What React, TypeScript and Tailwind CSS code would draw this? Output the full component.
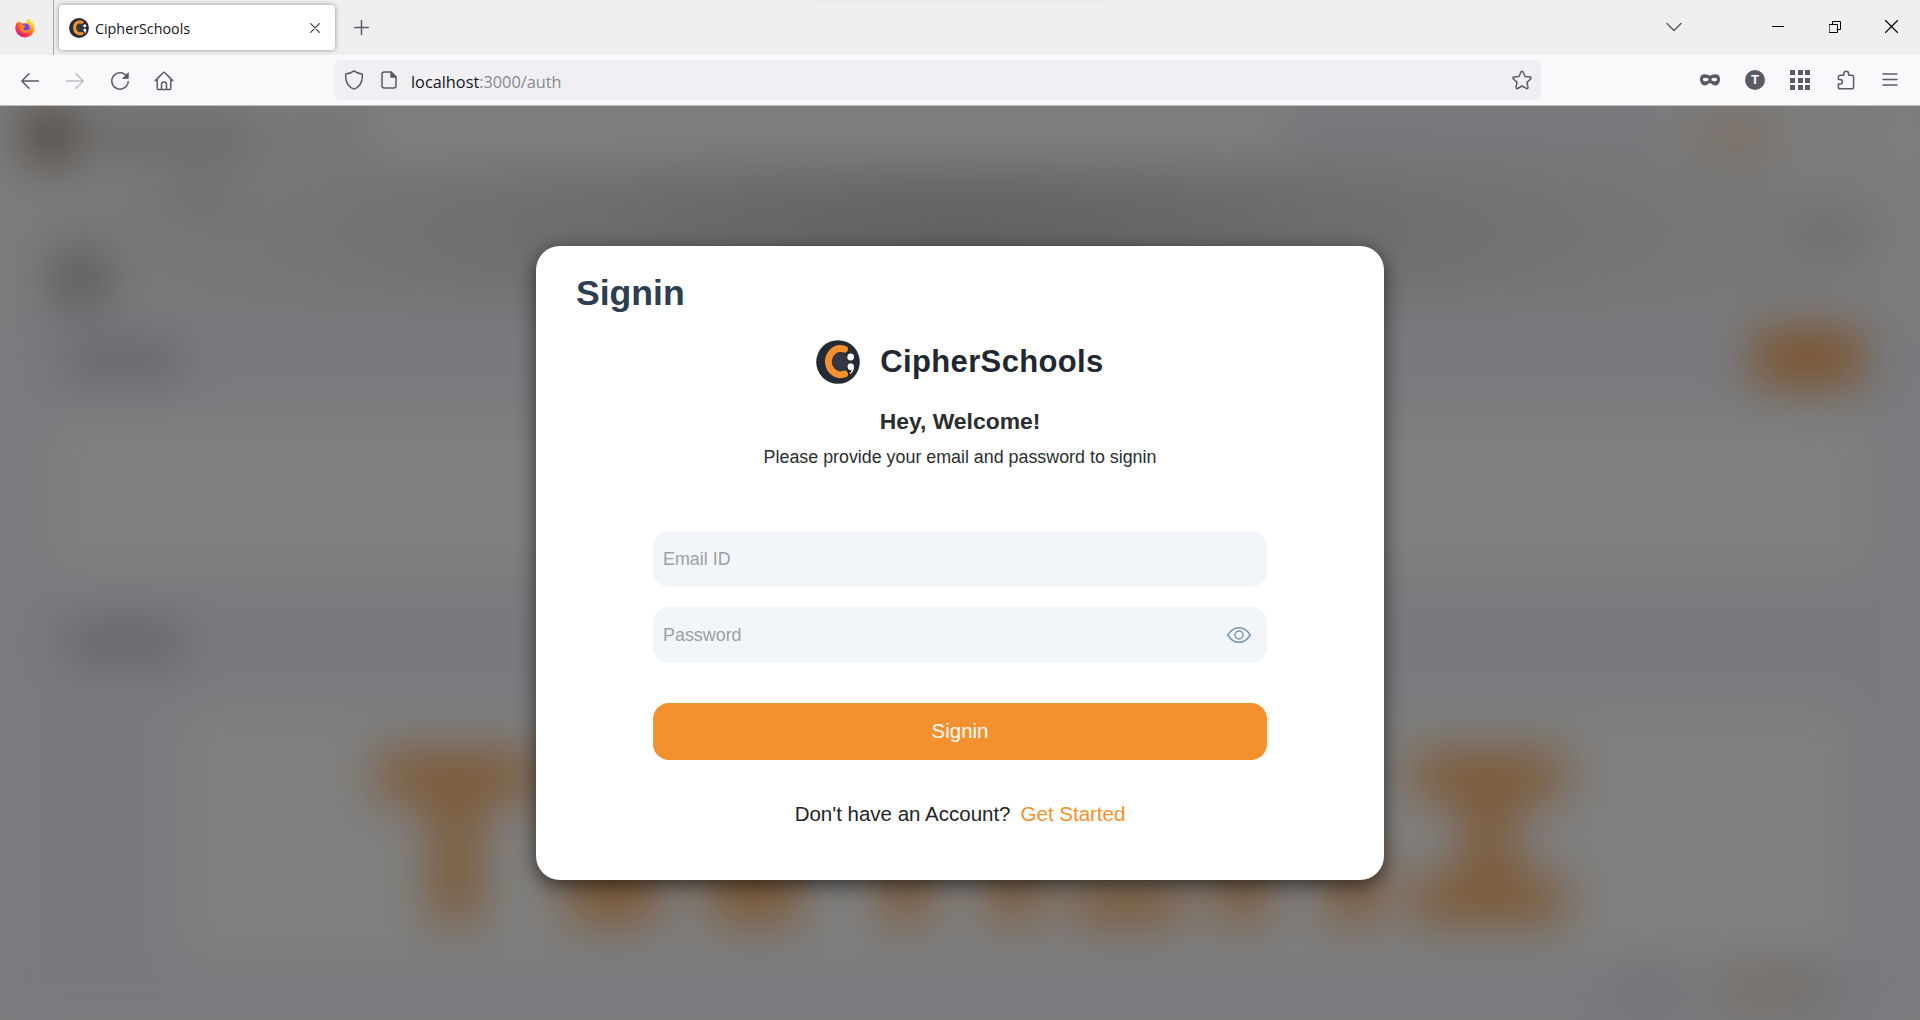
import type { ReactNode } from "react";

function Logo({ className }: { className: string }) {
  return (
    <svg viewBox="0 0 44 44" className={className} aria-hidden="true">
      <circle cx="22" cy="22" r="21.8" fill="#252b35" />
      <circle cx="23" cy="22" r="10" fill="#333843" />
      <path d="M28.600 9.200C26.800 8.600 24.800 8.400 23 8.400A13.500 13.500 0 0 0 23 34.800C24.800 34.800 26.800 34.600 28.600 34" fill="none" stroke="#f3912e" strokeWidth="6.800" strokeLinecap="round" />
      <circle cx="34.700" cy="17" r="3.4" fill="#fff" />
      <path d="M34.500 23.200a3.4 3.4 0 0 1 3.500 3.600c0 3-1.200 5.700-3.700 7.200l-.8-.6c1.300-1.100 2-2.300 2.100-3.400a3.4 3.4 0 1 1-1.100-6.800z" fill="#fff" />
    </svg>
  );
}

function Firefox() {
  return (
    <svg viewBox="0 0 20 20" className="size-5" aria-hidden="true">
      <defs>
        <linearGradient id="fx" x1="0.85" y1="0.1" x2="0.2" y2="0.95">
          <stop offset="0" stopColor="#fff44f" />
          <stop offset="0.35" stopColor="#ff9a1f" />
          <stop offset="0.7" stopColor="#ff3b47" />
          <stop offset="1" stopColor="#e31587" />
        </linearGradient>
      </defs>
      <path d="M13.200.3c2.300 1.400 3.100 3 3.400 4.500.4-.3.500-.8.4-1.300 1.800 1.900 2.800 4.300 2.600 7a9.700 9.700 0 0 1-19.300.4C.2 7.700 1.100 5.300 2.300 3.800c0 .6.100 1 .3 1.300C3.200 4.200 4 3.400 4.900 2.900c-.1.700 0 1.300.4 1.700 1 0 2 .2 2.800.7 1.800-.7 3.400-.2 4 .1C11.600 3.300 12 1.300 13.200.3z" fill="url(#fx)" />
      <circle cx="10.200" cy="10" r="4.500" fill="#7542e5" />
      <path d="M5 6.500c1.500-.5 2.500 0 3.400.8 1 .1 1.900.3 1.900.9-.2.700-1.700 1-2 1.700-.2 1.700 1 2.600 2.500 2.500 1.500-.1 2.500-1.100 3.900-.5-1.500 3.300-6 4-8.400 1.400C4.500 11.300 4.300 8.300 5 6.500z" fill="#ff8a1c" />
    </svg>
  );
}

function Icon({ w = 20, h = 20, color = "#5b5b66", stroke = 1.5, children, className = "" }: { w?: number; h?: number; color?: string; stroke?: number; children: ReactNode; className?: string }) {
  return (
    <svg width={w} height={h} viewBox={`0 0 ${w} ${h}`} fill="none" stroke={color} strokeWidth={stroke} strokeLinecap="round" strokeLinejoin="round" className={`shrink-0 ${className}`} aria-hidden="true">
      {children}
    </svg>
  );
}

function TabStrip() {
  return (
    <div className="relative flex h-[55px] bg-[#efefef]">
      <div className="absolute top-0 left-[815px] h-px w-[290px] bg-[#e8e8e8] shadow-[0_0_6px_2px_#ebebeb]" />
      <div className="flex w-[54px] items-center border-r border-[#a9a9ac] pl-[15px]">
        <Firefox />
      </div>
      <div className="mt-[5px] ml-[5px] flex h-[45px] w-[276px] items-center rounded-[4px] bg-white pl-[10px] shadow-[0_0_5px_rgba(0,0,0,0.4)]">
        <Logo className="size-5" />
        <span className="ml-[6px] pt-[2px] text-[14.300px] leading-5 text-[#15141a]">CipherSchools</span>
        <Icon w={10} h={10} color="#3b3b40" stroke={1.2} className="mr-[15px] ml-auto">
          <path d="M.7.7l8.600 8.600M9.300.7L.7 9.300" />
        </Icon>
      </div>
      <Icon w={15} h={15} className="mt-5 ml-[19px]">
        <path d="M7.500.7v13.600M.7 7.500h13.600" />
      </Icon>
      <div className="ml-auto flex h-[53px] items-center pr-[22px]">
        <Icon w={16} h={10} className="mr-[90px]">
          <path d="M1 1.500l7 7 7-7" />
        </Icon>
        <Icon w={12} h={12} color="#000" stroke={1} className="mr-[45px]">
          <path d="M0 5.500h12" strokeLinecap="butt" />
        </Icon>
        <Icon w={12} h={12} color="#000" stroke={1} className="mr-[44px]">
          <path d="M.5 3.500h8v8h-8zM3.500 3.500v-3h8v8h-3" strokeLinejoin="miter" />
        </Icon>
        <Icon w={13} h={13} color="#000" stroke={1.100}>
          <path d="M.5.5l12 12M12.500.5l-12 12" />
        </Icon>
      </div>
    </div>
  );
}

function Toolbar() {
  return (
    <div className="flex h-[51px] items-center border-b border-[#bfbfc0] bg-[#f9f9fb]">
      <div className="flex items-center gap-[25px] pt-px pl-5">
        <Icon><path d="M18.500 10H2M9 2.800L1.800 10 9 17.200" /></Icon>
        <Icon color="#bdbdc2"><path d="M1.500 10H18M11 2.800L18.200 10 11 17.200" /></Icon>
        <Icon>
          <path d="M17.200 6A8.200 8.200 0 1 0 18.200 10.500" />
          <path d="M18.300 2v5.500h-5.500z" fill="#5b5b66" stroke="#5b5b66" strokeWidth="0.800" />
        </Icon>
        <Icon className="-ml-px">
          <path d="M1.300 9.600L9.200 1.700a1.100 1.100 0 0 1 1.600 0l7.900 7.900M3.200 8v9.200c0 .8.600 1.300 1.300 1.300h11c.8 0 1.300-.6 1.300-1.300V8M7.500 18.200v-4.700a2.500 2.500 0 0 1 5 0v4.700" />
        </Icon>
      </div>
      <div className="ml-40 flex h-10 w-[1207px] items-center rounded-[5px] bg-[#f0eff4] pr-[9px] pl-[10px]">
        <Icon><path d="M10 .9c2.500 2 5 2.900 8.300 3.200.5 7-2 12.500-8.300 15-6.300-2.500-8.800-8-8.300-15C5 3.800 7.500 2.900 10 .9z" /></Icon>
        <Icon w={16} h={18} className="ml-[17px]">
          <path d="M10 1H3.200C2 1 1 2 1 3.200v11.600C1 16 2 17 3.200 17h9.600c1.200 0 2.200-1 2.200-2.200V6z" />
          <path d="M10 1v5h5z" fill="#5b5b66" />
        </Icon>
        <span className="ml-[14px] pt-[3px] text-[16.300px] leading-6 text-[#15141a]">
          localhost<span className="text-[#88888e]">:3000/auth</span>
        </span>
        <Icon className="ml-auto">
          <path d="M10 1.200c.4 0 .7.200.9.600l2.200 4.700 5 .6c.9.100 1.200 1.100.6 1.700L15 12.400l1 5c.1.900-.7 1.500-1.500 1.100L10 16l-4.500 2.500c-.8.400-1.600-.2-1.500-1.100l1-5-3.700-3.600c-.6-.6-.3-1.600.6-1.700l5-.6 2.200-4.700c.2-.4.5-.6.9-.6z" />
        </Icon>
      </div>
      <div className="ml-auto flex items-center gap-[25px] pr-5">
        <Icon>
          <path fillRule="evenodd" stroke="none" fill="#5b5b66" d="M4.500 4.200C7 4 8.300 5.400 10 5.400s3-1.400 5.500-1.200c3 .1 4.500 1.500 4.500 4.800 0 4-2 6.500-4.800 6.500-2.500 0-3.400-2.300-5.200-2.300s-2.700 2.300-5.200 2.300C2 15.500 0 13 0 9c0-3.300 1.500-4.700 4.500-4.800zM5.600 7.800c-1.500 0-2.800.9-2.800 1.700s1.200 1.800 2.800 1.800 3-.9 3-1.700-1.400-1.800-3-1.800zm8.800 0c-1.600 0-3 1-3 1.800s1.400 1.700 3 1.700 2.800-1 2.800-1.800-1.300-1.700-2.800-1.700z" />
        </Icon>
        <span className="flex size-5 items-center justify-center rounded-full bg-[#5b5b66] font-['Liberation_Sans'] text-[13px] leading-5 font-bold text-white">T</span>
        <span className="grid size-5 grid-cols-3 gap-[2.500px]">
          {Array.from({ length: 9 }, (_, i) => <i key={i} className="bg-[#5b5b66]" />)}
        </span>
        <Icon className="ml-px">
          <path d="M6.200 5.200h1.600V3.700a2.400 2.400 0 0 1 4.800 0v1.500h3.200c1 0 1.800.8 1.800 1.800v10c0 1-.8 1.800-1.800 1.800H4.200c-1 0-1.800-.8-1.800-1.800v-3h1.700a2.300 2.300 0 0 0 0-4.600H2.400V7c0-1 .8-1.800 1.800-1.800z" />
        </Icon>
        <Icon className="-ml-px"><path d="M3 4h14M3 9.500h14M3 15h14" /></Icon>
      </div>
    </div>
  );
}

/* Profile page that shows, blurred, behind the dialog */
function ProfilePage() {
  return (
    <div className="flex h-[914px] flex-col bg-[#f2f5fc] blur-[24px]" aria-hidden="true">
      <div className="flex h-[58px] shrink-0 items-center bg-white pl-[24px]">
        <i className="size-[50px] rounded-full bg-[#a07850] ring-4 ring-inset ring-[#252b35]" />
        <i className="ml-3 h-7 w-[175px] bg-[#c0c0c0]" />
        <i className="ml-4 h-6 w-[90px] bg-[#d4d4d4]" />
        <i className="ml-[908px] h-10 w-[400px] rounded-full bg-[#e9edf6]" />
        <i className="ml-5 h-7 w-[85px] bg-[#f0cfae]" />
        <i className="ml-[50px] h-5 w-[50px] bg-[#e0e0e0]" />
      </div>
      <div className="flex h-[140px] shrink-0 items-center bg-[radial-gradient(ellipse_55%_150%_at_50%_45%,#c0c0c0,#e0e0e0_45%,#fcfcfc)] pl-[50px]">
        <i className="mt-[90px] size-[60px] rounded-full bg-[#b0b0b0]" />
        <i className="mt-[-85px] ml-[52px] h-[30px] w-[70px] bg-[#d6d8d8]" />
        <i className="mt-[3px] mr-[55px] ml-auto h-[38px] w-[74px] bg-[#d6d8d8]" />
      </div>
      <div className="flex h-[112px] shrink-0 items-center justify-between pr-[57px] pl-[66px]">
        <i className="h-8 w-[115px] bg-[#c3c5cd]" />
        <i className="mt-[-4px] h-[52px] w-[110px] rounded-[12px] bg-[#f6a04c]" />
      </div>
      <div className="mx-[50px] h-[158px] shrink-0 rounded-[16px] bg-white" />
      <div className="flex h-[135px] shrink-0 items-center pl-[68px]">
        <i className="h-[36px] w-[115px] bg-[#c0c4ce]" />
      </div>
      <div className="mr-[70px] ml-[180px] h-[250px] shrink-0 rounded-[16px] bg-white">
        <svg viewBox="180 709 1670 250" className="h-full w-full" fill="#f8b36e">
          <path d="M378 750h154v50h-52v124h-48V800h-54zM555 750h104v174h-90zM700 750h100v174H712zM882 750h48v174h-48zM990 750h48v174h-48zM1072 876h110v48h-110zM1218 750h48v174h-48zM1328 850h50v74h-50zM1412 750h152v50h-50v74h50v50h-152v-50h52v-74h-52z" />
        </svg>
      </div>
      <div className="flex items-center justify-end pt-[12px] pr-[85px]">
        <i className="h-8 w-[55px] bg-[#d8dbe2]" />
        <i className="ml-[50px] h-9 w-[70px] bg-[#edd6c0]" />
        <i className="h-9 w-10 bg-[#d8d8d8]" />
      </div>
    </div>
  );
}

function Field({ label, children }: { label: string; children?: ReactNode }) {
  return (
    <div className="flex h-14 items-center justify-between rounded-[16px] bg-[#f2f5fa] pr-4 pl-[10px] text-[17.900px] text-[#9da0a3]">
      <span>{label}</span>
      {children}
    </div>
  );
}

function SigninDialog() {
  return (
    <div className="h-[634px] w-[848px] rounded-[24px] bg-white px-10 pt-[27px] font-['Liberation_Sans',Arial,sans-serif] shadow-[0_5px_20px_rgba(0,0,0,0.600)]">
      <h1 className="text-[35.600px] leading-10 font-bold text-[#2c3e50]">Signin</h1>
      <div className="mx-auto w-[614px]">
        <div className="mt-[27px] flex h-11 items-center justify-center gap-5">
          <Logo className="size-[44px]" />
          <span className="text-[31px] leading-[44px] font-bold tracking-[0.350px] text-[#222831]">CipherSchools</span>
        </div>
        <h2 className="mt-[21px] text-center text-[22.900px] leading-8 font-bold text-[#2a2e30]">Hey, Welcome!</h2>
        <p className="mt-[6px] text-center text-[17.850px] leading-7 text-[#2a2e30]">Please provide your email and password to signin</p>
        <div className="mt-[60px] flex flex-col gap-5">
          <Field label="Email ID" />
          <Field label="Password">
            <Icon w={24} h={18} color="#7b96a8" stroke={1.500}>
              <path d="M.8 9C3.500 4.500 7.300 1.700 12 1.700S20.500 4.500 23.200 9C20.500 13.500 16.700 16.300 12 16.300S3.500 13.500.8 9z" />
              <circle cx="12" cy="9" r="4" />
            </Icon>
          </Field>
        </div>
        <button className="mt-10 block h-[57px] w-full rounded-[16px] bg-[#f3912e] pb-px text-[20.500px] text-white">Signin</button>
        <p className="mt-10 flex justify-center gap-[10px] text-[20.500px] leading-7 text-[#222426]">
          Don't have an Account?<a className="text-[#f3912e]">Get Started</a>
        </p>
      </div>
    </div>
  );
}

export default function App() {
  return (
    <div className="h-[1020px] w-[1920px] overflow-hidden font-['Open_Sans','Noto_Sans',sans-serif]">
      <TabStrip />
      <Toolbar />
      <main className="relative h-[914px] overflow-hidden bg-[#f5f7fb]">
        <ProfilePage />
        <div className="absolute inset-0 flex justify-center bg-black/50 pt-[140px]">
          <SigninDialog />
        </div>
      </main>
    </div>
  );
}
